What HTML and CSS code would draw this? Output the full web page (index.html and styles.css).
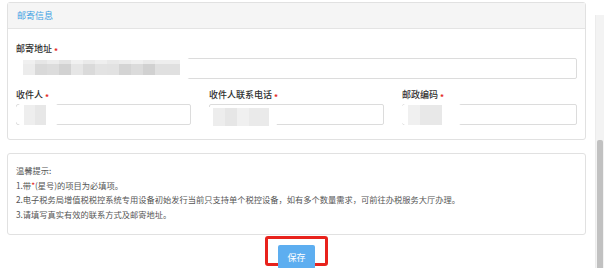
FILE: index.html
```html
<!DOCTYPE html>
<html lang="zh-CN">
<head>
  <meta charset="UTF-8" />
  <meta name="viewport" content="width=device-width, initial-scale=1.0"/>
  <title>邮寄信息</title>
  <link rel="stylesheet" href="styles.css">
</head>
<body>
  <div class="page">
    <div class="main">
      <div class="panel">
        <div class="panel-hd">邮寄信息</div>
        <div class="panel-bd">
          <label>邮寄地址 <span class="req">*</span></label>
          <div class="field">
            <input type="text" class="inp" />
            <div class="mask mask-addr"><div class="mosaic mosaic-addr"></div></div>
          </div>

          <div class="row">
            <div class="col">
              <label>收件人 <span class="req">*</span></label>
              <div class="field">
                <input type="text" class="inp" />
                <div class="mask mask-name"><div class="mosaic mosaic-name"></div></div>
              </div>
            </div>
            <div class="col">
              <label>收件人联系电话 <span class="req">*</span></label>
              <div class="field">
                <input type="text" class="inp" />
                <div class="mask mask-tel"><div class="mosaic mosaic-tel"></div></div>
              </div>
            </div>
            <div class="col">
              <label>邮政编码 <span class="req">*</span></label>
              <div class="field">
                <input type="text" class="inp" />
                <div class="mask mask-zip"><div class="mosaic mosaic-zip"></div></div>
              </div>
            </div>
          </div>
        </div>
      </div>

      <div class="panel tips">
        <p>温馨提示:</p>
        <p>1.带<span class="req-tip">*</span>(星号)的项目为必填项。</p>
        <p>2.电子税务局增值税税控系统专用设备初始发行当前只支持单个税控设备，如有多个数量需求，可前往办税服务大厅办理。</p>
        <p>3.请填写真实有效的联系方式及邮寄地址。</p>
      </div>

      <div class="actions">
        <div class="highlight">
          <button class="btn">保存</button>
        </div>
      </div>
    </div>

    <div class="scrollbar">
      <div class="thumb"></div>
    </div>
  </div>
</body>
</html>
```

FILE: styles.css
```css
html, body {
  margin: 0;
  padding: 0;
  background: #fff;
  overflow: hidden;
}
body {
  font-family: "Noto Sans CJK SC", "Liberation Sans", sans-serif;
  color: #444;
  height: 268px;
}
.page {
  display: flex;
  height: 268px;
}
.main {
  width: 579px;
  margin-left: 7px;
  padding-top: 2px;
}
.panel {
  border: 1px solid #e1e1e1;
  border-radius: 3px;
  background: #fff;
}
.panel-hd {
  height: 25px;
  line-height: 25px;
  padding-left: 9px;
  background: #f5f5f5;
  border-bottom: 1px solid #e4e4e4;
  color: #3d9fe3;
  font-size: 9px;
}
.panel-bd {
  padding: 14px 8px 14px 8px;
}
label {
  display: block;
  font-size: 9px;
  line-height: 12px;
  height: 12px;
  margin-bottom: 3px;
  color: #2f2f2f;
  font-weight: 500;
}
.req {
  color: #e4261f;
  font-size: 8px;
  font-weight: bold;
  position: relative;
  top: 2px;
}
.req-tip {
  color: #e4261f;
}
.field {
  position: relative;
}
.inp {
  display: block;
  box-sizing: border-box;
  width: 100%;
  height: 21px;
  margin: 0;
  border: 1px solid #dcdcdc;
  border-radius: 2px;
  background: #fff;
  outline: none;
}
.row {
  display: grid;
  grid-template-columns: 1fr 1fr 1fr;
  column-gap: 18px;
  margin-top: 10px;
}

/* redacted values */
.mask {
  position: absolute;
  background: #fff;
  border-radius: 10px;
  filter: blur(0.6px);
}
.mosaic {
  position: absolute;
}
.mask-addr {
  left: -4px;
  top: -2px;
  width: 180px;
  height: 25px;
}
.mosaic-addr {
  left: 11px;
  top: 4px;
  width: 157px;
  height: 15px;
  background:
    linear-gradient(90deg, #f0f0f0 0 12px, #e6e6e6 12px 24px, #ececec 24px 36px, #e4e4e4 36px 48px, #f1f1f1 48px 60px, #eaeaea 60px 72px, #efefef 72px 84px, #e9e9e9 84px 96px, #ececec 96px 108px, #f0f0f0 108px 120px, #eaeaea 120px 132px, #eeeeee 132px 157px) top / 100% 4px no-repeat,
    linear-gradient(90deg, #ececec 0 12px, #d9d9d9 12px 24px, #dcdcdc 24px 36px, #d2d2d2 36px 48px, #e6e6e6 48px 60px, #dadada 60px 72px, #e3e3e3 72px 84px, #e2e2e2 84px 96px, #d4d4d4 96px 108px, #dbdbdb 108px 120px, #d1d1d1 120px 132px, #e0e0e0 132px 157px) bottom / 100% 11px no-repeat;
}
.mask-name {
  left: -2px;
  top: -1px;
  width: 48px;
  height: 23px;
}
.mosaic-name {
  left: 10px;
  top: 2px;
  width: 22px;
  height: 20px;
  background: linear-gradient(90deg, #eeeeee 0 11px, #e7e7e7 11px 22px);
}
.mask-tel {
  left: -6px;
  top: 3px;
  width: 74px;
  height: 20px;
  border-radius: 4px;
}
.mosaic-tel {
  left: 10px;
  top: 1px;
  width: 56px;
  height: 18px;
  background:
    linear-gradient(90deg, #ededed 0 12px, #e6e6e6 12px 24px, #f0f0f0 24px 36px, #eaeaea 36px 56px);
}
.mask-zip {
  left: -3px;
  top: -1px;
  width: 66px;
  height: 23px;
}
.mosaic-zip {
  left: 9px;
  top: 2px;
  width: 34px;
  height: 20px;
  background: linear-gradient(90deg, #f0f0f0 0 12px, #e8e8e8 12px 34px);
}

.tips {
  margin-top: 13px;
  padding: 9px 8px 13px 8px;
  font-size: 8.25px;
  color: #555;
}
.tips p {
  margin: 0;
  line-height: 14.5px;
}
.actions {
  display: flex;
  justify-content: center;
  margin-top: 1px;
}
.highlight {
  border: 3px solid #e8221c;
  border-radius: 3px;
  padding: 6px 10px 0 10px;
  height: 30px;
  box-sizing: border-box;
}
.btn {
  display: block;
  width: 37px;
  height: 24px;
  border: none;
  border-radius: 2px;
  background: #5daef0;
  color: #fff;
  font-family: "Noto Sans CJK SC", sans-serif;
  font-size: 9px;
  padding: 0;
}
.scrollbar {
  width: 9px;
  margin-left: 9px;
  margin-top: 15px;
  background: #f3f3f3;
  border-left: 1px solid #ececec;
  box-sizing: border-box;
  padding-top: 125px;
}
.thumb {
  margin-left: 1px;
  width: 6px;
  height: 140px;
  background: #c1c1c1;
  border-radius: 2px;
}
```
